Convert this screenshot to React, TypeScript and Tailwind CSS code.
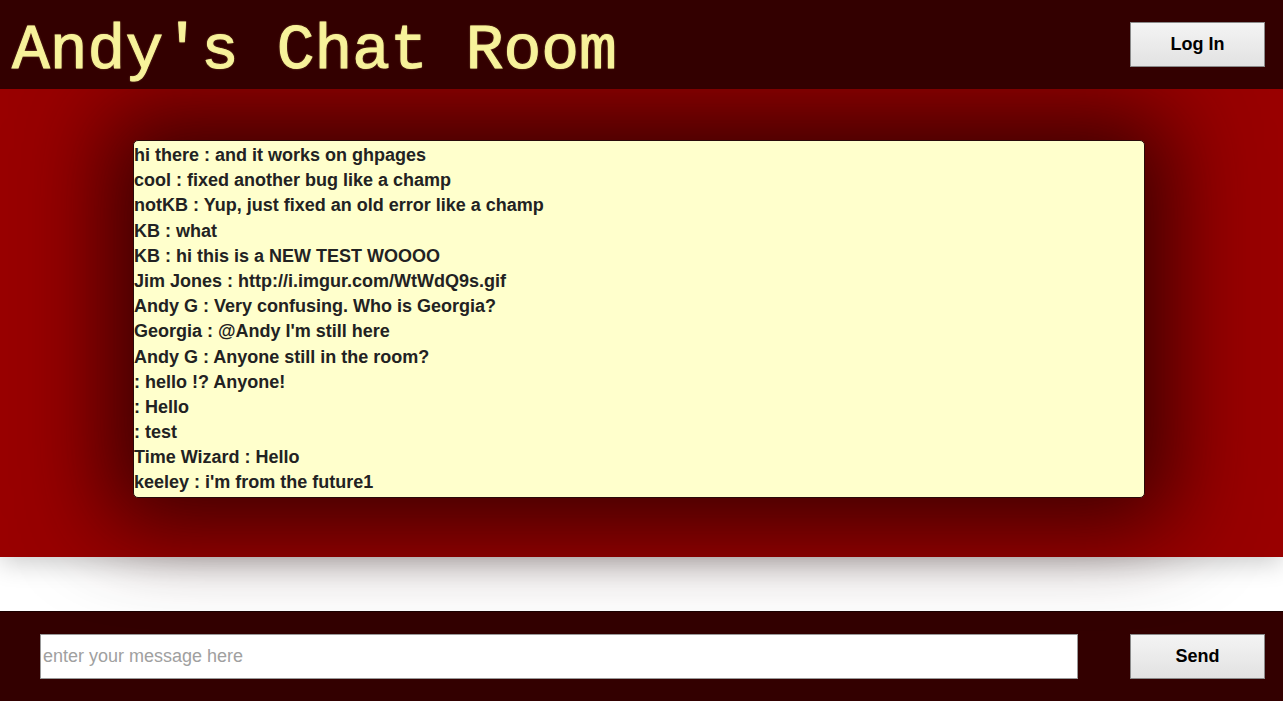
import React from "react";

const messages = [
  "hi there : and it works on ghpages",
  "cool : fixed another bug like a champ",
  "notKB : Yup, just fixed an old error like a champ",
  "KB : what",
  "KB : hi this is a NEW TEST WOOOO",
  "Jim Jones : http://i.imgur.com/WtWdQ9s.gif",
  "Andy G : Very confusing. Who is Georgia?",
  "Georgia : @Andy I'm still here",
  "Andy G : Anyone still in the room?",
  ": hello !? Anyone!",
  ": Hello",
  ": test",
  "Time Wizard : Hello",
  "keeley : i'm from the future1",
];

const btn =
  "w-[135px] h-[45px] border border-[#8a8a8a] bg-gradient-to-b from-[#f4f4f4] to-[#e2e2e2] text-[18px] font-bold text-black font-['Liberation_Sans',Arial,sans-serif]";

const App = () => {
  return (
    <div className="w-full h-[701px] flex flex-col bg-white overflow-hidden">
      <header className="h-[89px] bg-[#330000] flex items-center justify-between pl-[12px] pr-[18px] relative z-20">
        <h1 className="text-[63px] leading-none text-[#f7f29a] font-['Liberation_Mono','Courier_New',monospace] [-webkit-text-stroke:1px_#f7f29a] [text-shadow:0_0_2px_rgba(255,240,150,0.8)] pt-[13px]">
          Andy's Chat Room
        </h1>
        <button className={btn}>Log In</button>
      </header>

      <main className="h-[468px] bg-[#990000] flex pl-[133px] pt-[51px] relative z-10 shadow-[0_6px_24px_rgba(0,0,0,0.2)]">
        <div className="w-[1012px] h-[358px] bg-[#ffffcc] border border-[#2a0a0a] rounded-[5px] shadow-[0_0_90px_25px_rgba(40,0,0,0.85)] pt-[2px] overflow-hidden">
          {messages.map((m, i) => (
            <div
              key={i}
              className="h-[25.2px] leading-[25.2px] text-[18px] font-bold text-[#222] font-['Liberation_Sans',Arial,sans-serif] whitespace-nowrap"
            >
              {m}
            </div>
          ))}
        </div>
      </main>

      <div className="h-[54px] bg-white" />

      <footer className="flex-1 bg-[#330000] border-t border-[#1a0000] flex items-center justify-between pl-[40px] pr-[18px]">
        <input
          className="w-[1038px] h-[45px] bg-white border border-[#999] px-[2px] text-[18px] font-['Liberation_Sans',Arial,sans-serif] placeholder:text-[#a0a0a0] outline-none"
          placeholder="enter your message here"
        />
        <button className={btn}>Send</button>
      </footer>
    </div>
  );
};

export default App;
